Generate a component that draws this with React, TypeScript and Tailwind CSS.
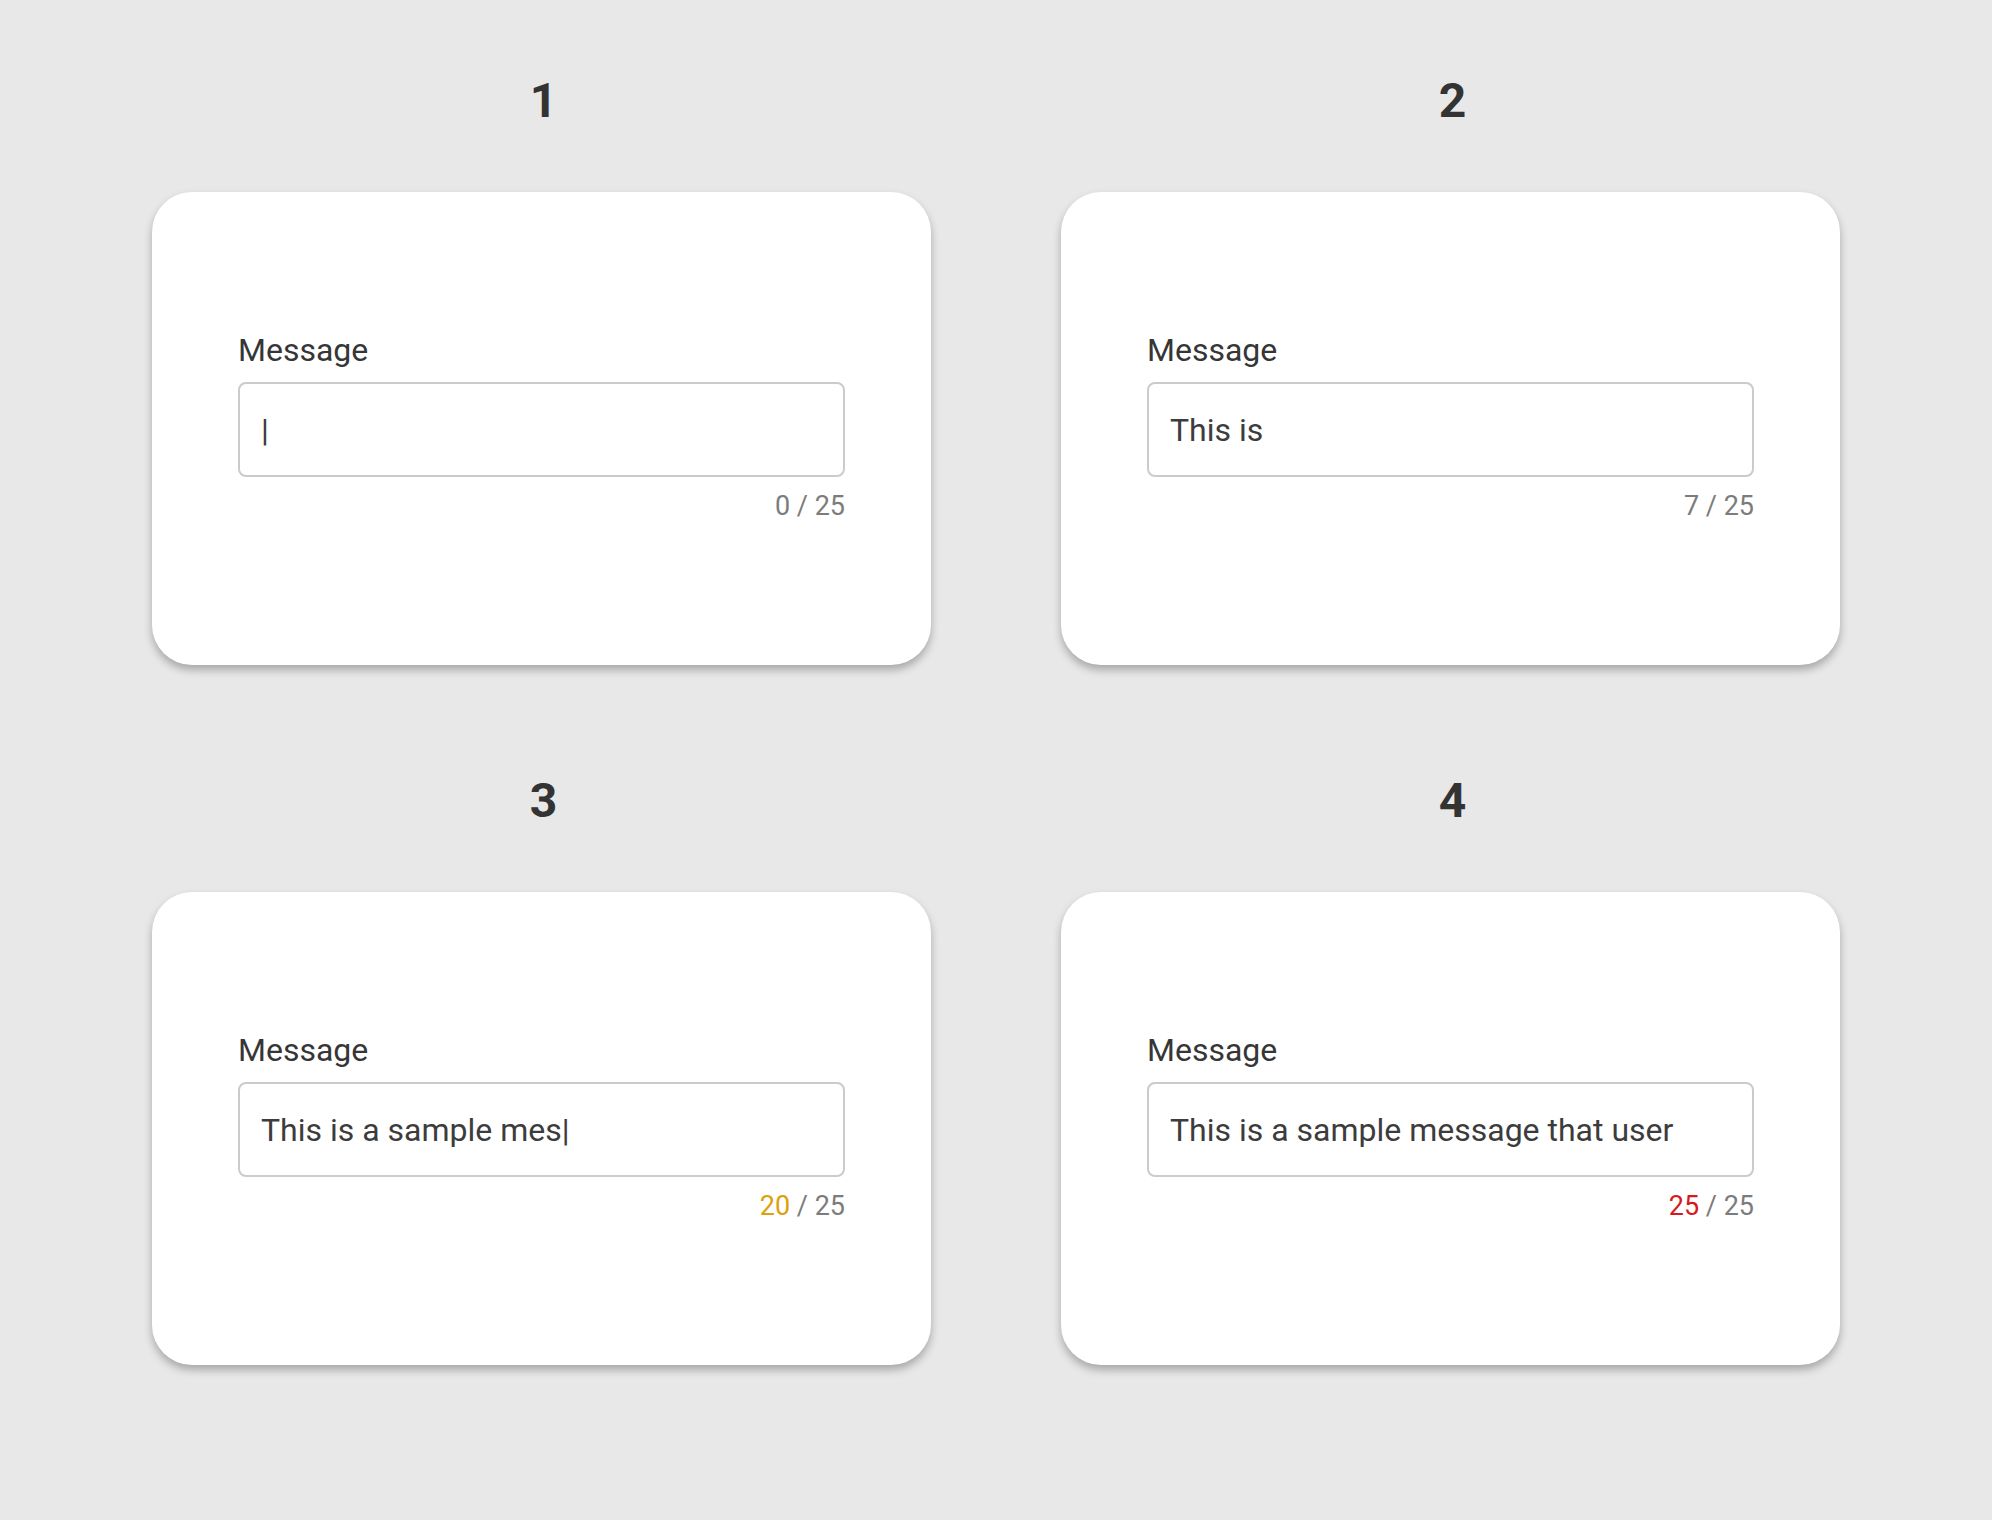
import React from "react";

interface CardData {
  id: number;
  text: string;
  count: number;
  countColor: string;
}

const cards: CardData[] = [
  { id: 1, text: "|", count: 0, countColor: "text-[#7c7c7c]" },
  { id: 2, text: "This is", count: 7, countColor: "text-[#7c7c7c]" },
  { id: 3, text: "This is a sample mes|", count: 20, countColor: "text-[#dca10c]" },
  { id: 4, text: "This is a sample message that user", count: 25, countColor: "text-[#d71a1f]" },
];

const MessageCard: React.FC<{ data: CardData }> = ({ data }) => {
  return (
    <div className="flex flex-col items-center">
      <h2 className="pl-[4px] text-[48px] leading-[56px] font-bold text-[#333333]">{data.id}</h2>
      <div className="mt-[63px] flex h-[473px] w-full flex-col justify-center rounded-[40px] bg-white px-[86px] pb-[3px] shadow-[0_5px_8px_rgba(0,0,0,0.28)]">
        <label className="text-[32px] leading-[36px] text-[#363636]">Message</label>
        <div className="mt-[14px] flex h-[95px] items-center rounded-[8px] border-2 border-[#cbcbcb] pl-[21px] text-[32px] text-[#3c3c3c] whitespace-nowrap overflow-hidden">
          {data.text}
        </div>
        <div className="mt-[13px] text-right text-[27px] leading-[32px] text-[#7c7c7c]">
          <span className={data.countColor}>{data.count}</span> / 25
        </div>
      </div>
    </div>
  );
};

export default function App() {
  return (
    <div
      className="min-h-screen w-full bg-[#e8e8e8] px-[152px] pt-[73px]"
      style={{ fontFamily: "Roboto, 'Liberation Sans', sans-serif" }}
    >
      <div className="grid grid-cols-2 gap-x-[130px] gap-y-[108px]">
        {cards.map((c) => (
          <MessageCard key={c.id} data={c} />
        ))}
      </div>
    </div>
  );
}
